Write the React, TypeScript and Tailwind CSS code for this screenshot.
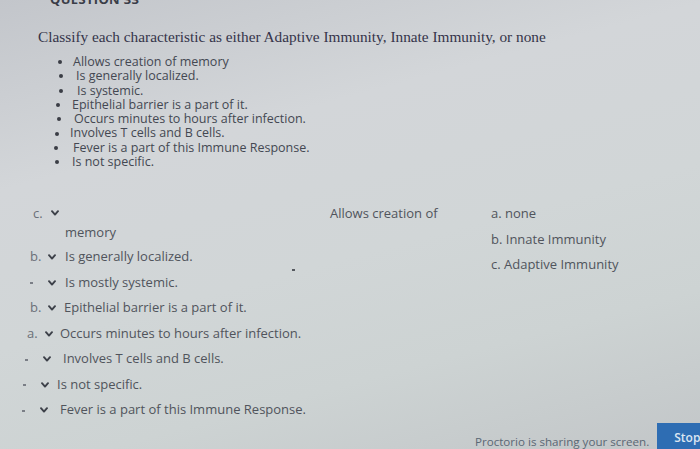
const bullets = [
  { text: 'Allows creation of memory', pl: 'pl-[58px]', ml: 'ml-[11px]' },
  { text: 'Is generally localized.', pl: 'pl-[59px]', ml: 'ml-[13px]' },
  { text: 'Is systemic.', pl: 'pl-[59px]', ml: 'ml-[14px]' },
  { text: 'Epithelial barrier is a part of it.', pl: 'pl-[56px]', ml: 'ml-[12px]' },
  { text: 'Occurs minutes to hours after infection.', pl: 'pl-[57px]', ml: 'ml-[13px]' },
  { text: 'Involves T cells and B cells.', pl: 'pl-[55px]', ml: 'ml-[11px]' },
  { text: 'Fever is a part of this Immune Response.', pl: 'pl-[54px]', ml: 'ml-[15px]' },
  { text: 'Is not specific.', pl: 'pl-[55px]', ml: 'ml-[13px]' },
];

const rows = [
  { letter: 'b.', text: 'Is generally localized.', pl: 'pl-[30px]', ml: 'ml-[9px]' },
  { letter: '-', text: 'Is mostly systemic.', pl: 'pl-[30px]', ml: 'ml-[9px]' },
  { letter: 'b.', text: 'Epithelial barrier is a part of it.', pl: 'pl-[30px]', ml: 'ml-[8px]' },
  { letter: 'a.', text: 'Occurs minutes to hours after infection.', pl: 'pl-[27px]', ml: 'ml-[7px]' },
  { letter: '-', text: 'Involves T cells and B cells.', pl: 'pl-[25px]', ml: 'ml-[12px]' },
  { letter: '-', text: 'Is not specific.', pl: 'pl-[23px]', ml: 'ml-[8px]' },
  { letter: '-', text: 'Fever is a part of this Immune Response.', pl: 'pl-[22px]', ml: 'ml-[12px]' },
];

const answers = ['a. none', 'b. Innate Immunity', 'c. Adaptive Immunity'];

function Chevron() {
  return (
    <svg width="8" height="6" viewBox="0 0 8 6" className="shrink-0">
      <path
        d="M1 1.2 L4 4.6 L7 1.2"
        fill="none"
        stroke="#3d4149"
        strokeWidth="1.9"
        strokeLinecap="round"
        strokeLinejoin="round"
      />
    </svg>
  );
}

function Letter({ value }: { value: string }) {
  return (
    <span className="w-[18px] shrink-0 text-[#6b7078]">
      {value === '-' ? <span className="inline-block w-[3px] h-[2px] bg-[#7a7e86] align-middle" /> : value}
    </span>
  );
}

export default function App() {
  return (
    <div className="relative w-full h-[449px] overflow-hidden bg-[linear-gradient(165deg,#c3c6cb_0%,#d3d6d9_30%,#d1d6d7_55%,#cdd3d3_75%,#c2c6c8_100%)] font-['Open_Sans',sans-serif]">
      <div className="h-[6px] overflow-hidden pl-[50px]">
        <div className="-mt-[9px] text-[13px] leading-[16px] font-bold text-[#3a3d48] tracking-wide">QUESTION 33</div>
      </div>

      <div className="mt-[22px] pl-[38px] font-['Liberation_Serif',serif] text-[15.3px] leading-[18px] text-[#35344a]">
        Classify each characteristic as either Adaptive Immunity, Innate Immunity, or none
      </div>

      <ul className="mt-[9px] text-[12.5px] leading-[14.3px] text-[#444852]">
        {bullets.map((b) => (
          <li key={b.text} className={`flex items-center ${b.pl}`}>
            <span className="w-[4px] h-[4px] rounded-full bg-[#3a3d45] shrink-0" />
            <span className={b.ml}>{b.text}</span>
          </li>
        ))}
      </ul>

      <div className="mt-[32px] flex text-[13px] text-[#50545c]">
        <div className="w-[491px] shrink-0">
          <div className="flex items-center h-[24px]">
            <div className="w-[330px] flex items-center pl-[33px]">
              <Letter value="c." />
              <Chevron />
            </div>
            <span>Allows creation of</span>
          </div>
          <div className="h-[15px] leading-[15px] pl-[65px]">memory</div>
          <div className="mt-[4px]">
            {rows.map((r) => (
              <div key={r.text} className={`flex items-center h-[25.5px] ${r.pl}`}>
                <Letter value={r.letter} />
                <Chevron />
                <span className={r.ml}>{r.text}</span>
              </div>
            ))}
          </div>
        </div>
        <div>
          {answers.map((a) => (
            <div key={a} className="h-[25.5px] flex items-center">
              {a}
            </div>
          ))}
        </div>
      </div>

      <span className="absolute left-[292px] top-[269px] w-[3px] h-[2px] bg-[#55595f]" />

      <div className="absolute left-[475px] top-[423px] flex items-start">
        <span className="mt-[11px] text-[11.6px] leading-[16px] text-[#5a6774] whitespace-nowrap">
          Proctorio is sharing your screen.
        </span>
        <div className="ml-[8px] w-[50px] h-[30px] bg-[#2e6db3] pl-[17px] pt-[8px] text-[12px] leading-[14px] text-[#dbe6f2] font-semibold">
          Stop
        </div>
      </div>
    </div>
  );
}
